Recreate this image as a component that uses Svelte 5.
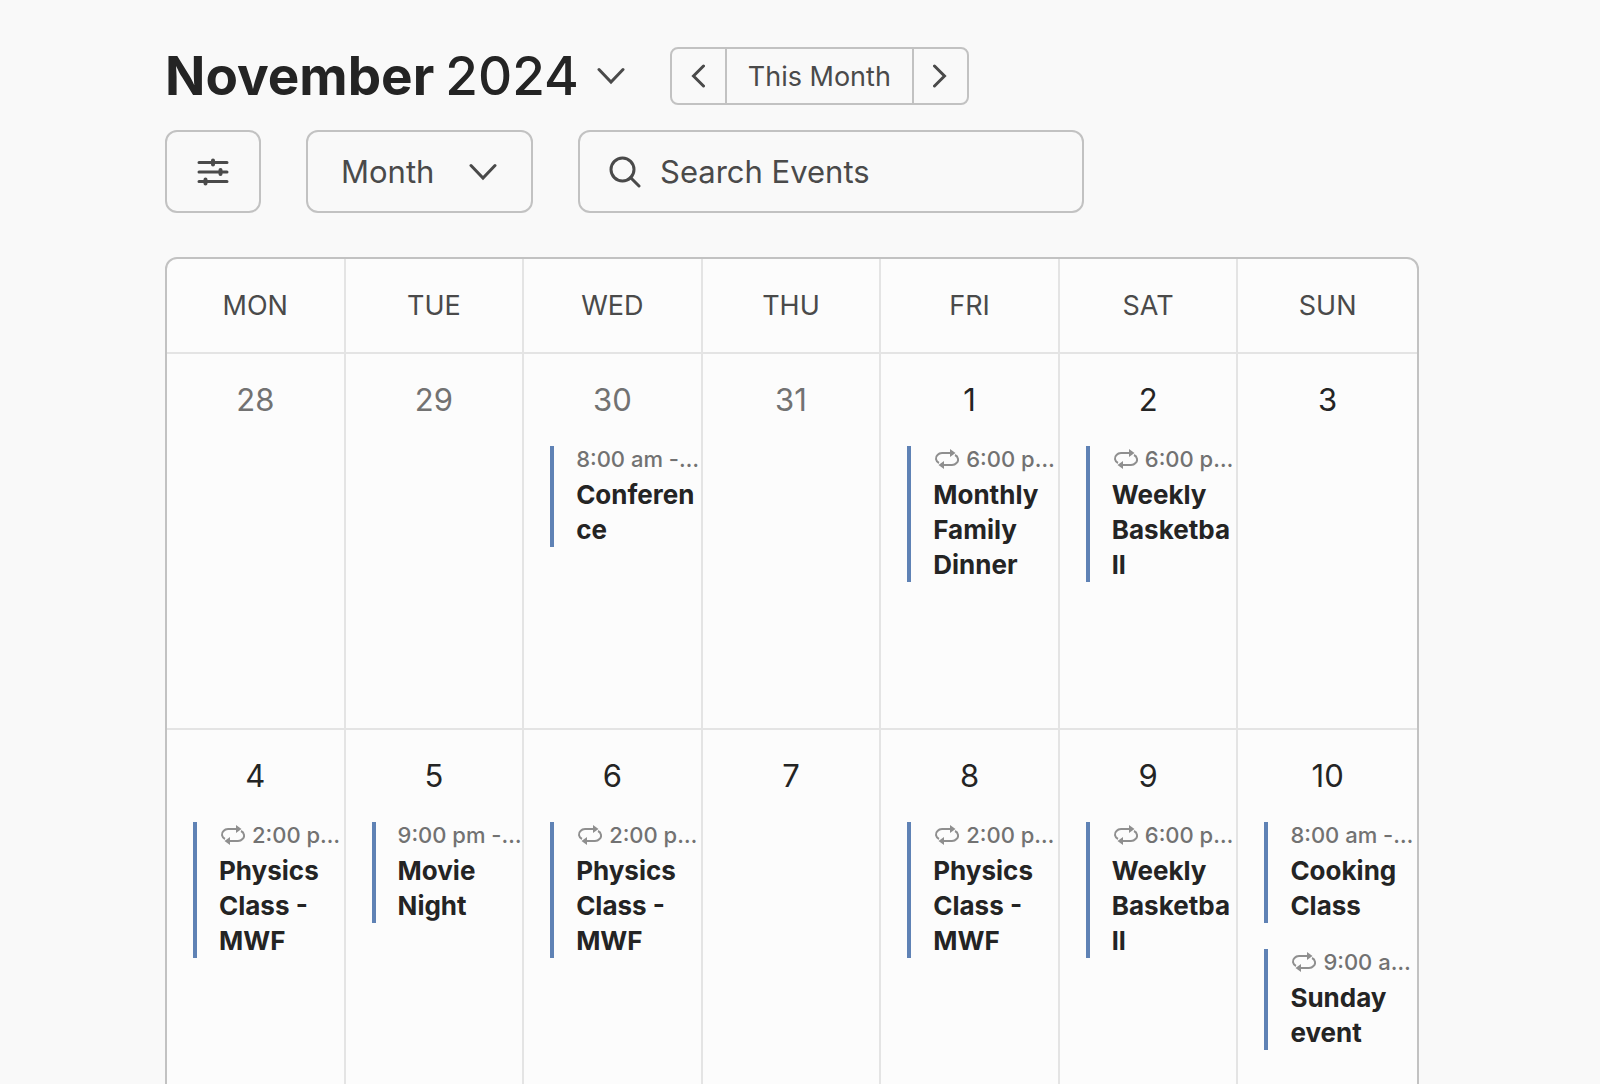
<script lang="ts">
	interface CalendarEvent {
		time: string;
		title: string;
		repeats?: boolean;
	}

	interface Day {
		date: number;
		outside?: boolean;
		events: CalendarEvent[];
	}

	const weekdays = ['MON', 'TUE', 'WED', 'THU', 'FRI', 'SAT', 'SUN'];

	const physics: CalendarEvent = { time: '2:00 p…', title: 'Physics Class - MWF', repeats: true };
	const basketball: CalendarEvent = { time: '6:00 p…', title: 'Weekly Basketball', repeats: true };

	const weeks: Day[][] = [
		[
			{ date: 28, outside: true, events: [] },
			{ date: 29, outside: true, events: [] },
			{ date: 30, outside: true, events: [{ time: '8:00 am -…', title: 'Conference' }] },
			{ date: 31, outside: true, events: [] },
			{ date: 1, events: [{ time: '6:00 p…', title: 'Monthly Family Dinner', repeats: true }] },
			{ date: 2, events: [basketball] },
			{ date: 3, events: [] }
		],
		[
			{ date: 4, events: [physics] },
			{ date: 5, events: [{ time: '9:00 pm -…', title: 'Movie Night' }] },
			{ date: 6, events: [physics] },
			{ date: 7, events: [] },
			{ date: 8, events: [physics] },
			{ date: 9, events: [basketball] },
			{
				date: 10,
				events: [
					{ time: '8:00 am -…', title: 'Cooking Class' },
					{ time: '9:00 a…', title: 'Sunday event', repeats: true }
				]
			}
		]
	];

	let view = $state('Month');
	let search = $state('');
</script>

<div class="page">
	<header class="heading">
		<h1>
			<button class="month-picker" type="button">
				<span class="label">
					<strong>November</strong>
					<span>2024</span>
				</span>
				<svg width="28" height="18" viewBox="0 0 28 18" aria-hidden="true">
					<path d="M2 2.500 L14 15 L26 2.500" />
				</svg>
			</button>
		</h1>
		<div class="month-nav">
			<button class="step" type="button" aria-label="Previous month">
				<svg width="14" height="24" viewBox="0 0 14 24" aria-hidden="true">
					<path d="M12.500 2 L2.500 12 L12.500 22" />
				</svg>
			</button>
			<button class="current" type="button">This Month</button>
			<button class="step" type="button" aria-label="Next month">
				<svg width="14" height="24" viewBox="0 0 14 24" aria-hidden="true">
					<path d="M1.500 2 L11.500 12 L1.500 22" />
				</svg>
			</button>
		</div>
	</header>

	<div class="toolbar">
		<button class="filter" type="button" aria-label="Filters">
			<svg width="32" height="28" viewBox="0 0 32 28" aria-hidden="true">
				<path d="M2 4.500 H30 M2 14 H30 M2 23.500 H30" />
				<path class="knob" d="M16 2.500 V6.500 M23.500 12 V16 M8.500 21.500 V25.500" />
			</svg>
		</button>
		<div class="view">
			<select aria-label="View" bind:value={view}>
				<option>Month</option>
				<option>Week</option>
				<option>Day</option>
			</select>
			<svg width="28" height="18" viewBox="0 0 28 18" aria-hidden="true">
				<path d="M2 2.500 L14 15 L26 2.500" />
			</svg>
		</div>
		<label class="search">
			<svg width="32" height="32" viewBox="0 0 32 32" aria-hidden="true">
				<circle cx="13.500" cy="13.500" r="11.500" />
				<path d="M21.500 21.500 L30 30" />
			</svg>
			<input type="text" placeholder="Search Events" aria-label="Search Events" bind:value={search} />
		</label>
	</div>

	<div class="calendar">
		<table>
			<thead>
				<tr>
					{#each weekdays as weekday}
						<th scope="col">{weekday}</th>
					{/each}
				</tr>
			</thead>
			<tbody>
				{#each weeks as week}
					<tr>
						{#each week as day}
							<td>
								<div class="date" class:outside={day.outside}>{day.date}</div>
								<div class="events">
									{#each day.events as event}
										<article class="event">
											<div class="time">
												{#if event.repeats}
													<svg width="26" height="20" viewBox="0 0 26 20" role="img" aria-label="Repeats">
														<path d="M6 14 C2.500 12.500 2 8 4.500 6 C6 4.300 7 4 9 4 H18" />
														<path d="M22 6 C25.500 7.500 26 12 23.500 14 C22 15.700 21 16 19 16 H10" />
														<path class="head" d="M17 0 L22.500 4 L17 8 Z M11 12 L5.500 16 L11 20 Z" />
													</svg>
												{/if}
												<span>{event.time}</span>
											</div>
											<a href="#{event.title.toLowerCase().replaceAll(' ', '-')}">{event.title}</a>
										</article>
									{/each}
								</div>
							</td>
						{/each}
					</tr>
				{/each}
			</tbody>
		</table>
	</div>
</div>

<style>
	:global(body) {
		margin: 0;
		background: #f9f9f9;
	}

	.page {
		box-sizing: border-box;
		height: 100vh;
		overflow: hidden;
		padding: 47px 181px 0 165px;
		background: #f9f9f9;
		color: #242424;
		font-family: Inter, 'Liberation Sans', sans-serif;
	}

	button,
	select,
	input {
		box-sizing: border-box;
		margin: 0;
		padding: 0;
		border: 0;
		background: none;
		color: #4a4a4a;
		font: inherit;
	}

	button,
	select {
		cursor: pointer;
	}

	svg {
		display: block;
		flex: none;
		fill: none;
		stroke: #4a4a4a;
		stroke-linecap: round;
		stroke-width: 3;
	}

	.heading {
		display: flex;
		align-items: center;
		gap: 45px;
	}

	h1 {
		margin: 0;
		font-size: 53px;
		font-weight: 500;
		line-height: 58px;
	}

	.month-picker {
		display: flex;
		align-items: center;
		gap: 18px;
		color: #242424;
		white-space: nowrap;
	}

	.month-picker .label {
		display: flex;
		gap: 11px;
	}

	.month-picker strong {
		font-weight: 700;
	}

	.month-nav {
		display: flex;
		box-sizing: border-box;
		height: 58px;
		border: 2px solid #c2c2c2;
		border-radius: 8px;
	}

	.month-nav button {
		display: flex;
		align-items: center;
		justify-content: center;
	}

	.month-nav .step {
		width: 53px;
	}

	.month-nav .current {
		padding: 0 21px;
		border-right: 2px solid #c2c2c2;
		border-left: 2px solid #c2c2c2;
		font-size: 27px;
	}

	.toolbar {
		display: flex;
		gap: 45px;
		margin-top: 25px;
	}

	.filter,
	.view select,
	.search {
		box-sizing: border-box;
		height: 83px;
		border: 2px solid #c2c2c2;
		border-radius: 12px;
		font-size: 31px;
	}

	.filter {
		display: flex;
		flex: none;
		align-items: center;
		justify-content: center;
		width: 96px;
	}

	.filter .knob {
		stroke-width: 4;
	}

	.view {
		position: relative;
		flex: none;
	}

	.view select {
		width: 227px;
		padding-left: 33px;
		appearance: none;
	}

	.view svg {
		position: absolute;
		top: 50%;
		right: 36px;
		transform: translateY(-50%);
		pointer-events: none;
	}

	.search {
		display: flex;
		flex: 0 1 506px;
		align-items: center;
		gap: 19px;
		min-width: 0;
		padding: 0 29px;
	}

	.search input {
		flex: 1;
		min-width: 0;
		height: 100%;
		outline: none;
	}

	.search input::placeholder {
		color: #4a4a4a;
		opacity: 1;
	}

	.calendar {
		margin-top: 44px;
		overflow: hidden;
		border: 2px solid #c2c2c2;
		border-radius: 12px;
		background: #fcfcfc;
	}

	table {
		width: 100%;
		border-spacing: 0;
		table-layout: fixed;
	}

	th,
	td {
		box-sizing: border-box;
		border-right: 2px solid #e4e4e4;
		border-bottom: 2px solid #e4e4e4;
	}

	th:last-child,
	td:last-child {
		border-right: 0;
	}

	th {
		height: 95px;
		padding: 0;
		color: #4a4a4a;
		font-size: 27px;
		font-weight: 400;
	}

	td {
		height: 376px;
		padding: 26px 2px 26px 26px;
		vertical-align: top;
	}

	.date {
		margin-right: 24px;
		font-size: 31px;
		line-height: 40px;
		text-align: center;
	}

	.outside {
		color: #727272;
	}

	.events {
		display: flex;
		flex-direction: column;
		gap: 26px;
		margin-top: 26px;
	}

	.event {
		padding-left: 22px;
		border-left: 4px solid #5f82b5;
	}

	.time {
		display: flex;
		align-items: center;
		gap: 7px;
		height: 26px;
		margin-bottom: 5px;
		color: #727272;
		font-size: 22px;
		font-weight: 500;
		line-height: 26px;
	}

	.time span {
		white-space: nowrap;
	}

	.time svg {
		stroke: #8f8f8f;
		stroke-linecap: butt;
		stroke-width: 2;
	}

	.time .head {
		fill: #8f8f8f;
		stroke: none;
	}

	.event a {
		display: block;
		color: #242424;
		font-size: 26px;
		font-weight: 700;
		line-height: 35px;
		overflow-wrap: anywhere;
		text-decoration: none;
	}
</style>
